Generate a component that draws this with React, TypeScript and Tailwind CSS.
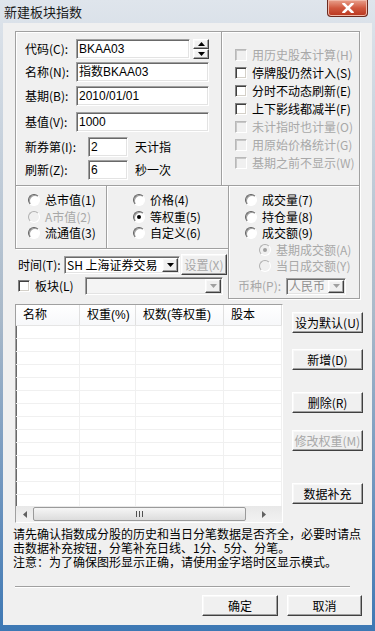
import React from "react";
import clsx from "clsx";

const sunken =
	"border border-t-[#a0a0a0] border-l-[#a0a0a0] border-r-white border-b-white shadow-[inset_1px_1px_0_#696969,inset_-1px_-1px_0_#e3e3e3]";
const raised =
	"border border-t-white border-l-white border-r-[#404040] border-b-[#404040] shadow-[inset_-1px_-1px_0_#a0a0a0,inset_1px_1px_0_#f8f8f8] bg-[#f0f0f0]";
const groupBox =
	"border border-[#a0a0a0] shadow-[inset_1px_1px_0_#ffffff,1px_1px_0_#ffffff]";

const Arrow = ({ disabled, up }: { disabled?: boolean; up?: boolean }) => (
	<svg width="7" height="4" viewBox="0 0 7 4">
		<path
			d={up ? "M0 4 L3.5 0 L7 4 Z" : "M0 0 L7 0 L3.5 4 Z"}
			fill={disabled ? "#a0a0a0" : "#000"}
		/>
	</svg>
);

const Check = ({ disabled }: { disabled?: boolean }) => (
	<span
		className={clsx(
			"box-border inline-block h-[12px] w-[12px] shrink-0 border",
			disabled
				? "border-t-[#b8b8b8] border-l-[#b8b8b8] border-r-white border-b-white bg-[#f0f0f0] shadow-[inset_1px_1px_0_#c8c8c8]"
				: "border-t-[#808080] border-l-[#808080] border-r-white border-b-white bg-white shadow-[inset_1px_1px_0_#404040,inset_-1px_-1px_0_#d4d0c8]",
		)}
	/>
);

const Radio = ({ checked, disabled }: { checked?: boolean; disabled?: boolean }) => (
	<span
		className={clsx(
			"box-border flex h-[12px] w-[12px] shrink-0 items-center justify-center rounded-full border",
			disabled
				? "border-t-[#b0b0b0] border-l-[#b0b0b0] border-r-white border-b-white bg-[#f0f0f0]"
				: "border-t-[#606060] border-l-[#606060] border-r-white border-b-white bg-white shadow-[inset_1px_1px_0_#a0a0a0]",
		)}
	>
		{checked ? (
			<span
				className={clsx(
					"h-[4px] w-[4px] rounded-full",
					disabled ? "bg-[#a0a0a0]" : "bg-black",
				)}
			/>
		) : null}
	</span>
);

const CheckRow = ({ label, disabled }: { label: string; disabled?: boolean }) => (
	<div className="flex h-[18px] items-center">
		<Check disabled={disabled} />
		<span className={clsx("ml-[5px]", disabled && "text-[#a8a8a8]")}>
			{label}
		</span>
	</div>
);

const RadioRow = ({
	label,
	checked,
	disabled,
	className,
}: {
	label: string;
	checked?: boolean;
	disabled?: boolean;
	className?: string;
}) => (
	<div className={clsx("flex h-[16.5px] items-center", className)}>
		<Radio checked={checked} disabled={disabled} />
		<span className={clsx("ml-[5px]", disabled && "text-[#a8a8a8]")}>
			{label}
		</span>
	</div>
);

const Button = ({
	children,
	disabled,
	className,
}: {
	children: React.ReactNode;
	disabled?: boolean;
	className?: string;
}) => (
	<div
		className={clsx(
			"flex h-[21px] items-center justify-center",
			raised,
			disabled && "text-[#a8a8a8]",
			className,
		)}
	>
		{children}
	</div>
);

const Field = ({ value, className }: { value: string; className?: string }) => (
	<div
		className={clsx(
			"flex h-[20px] items-center bg-white pl-[2px] font-['Liberation_Sans','Noto_Sans_CJK_SC',sans-serif]",
			sunken,
			className,
		)}
	>
		{value}
	</div>
);

const Select = ({
	value,
	disabled,
	className,
}: {
	value?: string;
	disabled?: boolean;
	className?: string;
}) => (
	<div
		className={clsx(
			"flex shrink-0 items-center justify-between pl-[2px]",
			sunken,
			disabled ? "bg-[#f4f4f4] text-[#909090]" : "bg-white",
			className,
		)}
	>
		<span className="whitespace-nowrap">{value}</span>
		<div
			className={clsx(
				"mr-[1px] flex h-[calc(100%-2px)] w-[16px] shrink-0 items-center justify-center",
				raised,
			)}
		>
			<Arrow disabled={disabled} />
		</div>
	</div>
);

const columns = [
	{ name: "名称", w: "w-[64px]" },
	{ name: "权重(%)", w: "w-[56px]" },
	{ name: "权数(等权重)", w: "w-[88px]" },
	{ name: "股本", w: "w-[58px]" },
];

const rows = Array.from({ length: 14 }, (_, i) => i);

export default function App() {
	return (
		<div className="flex h-[631px] w-[375px] flex-col overflow-hidden bg-gradient-to-b from-[#dfe5ec] via-[#a9b9c9] to-[#3d78b4] font-['Noto_Sans_CJK_SC','Liberation_Sans',sans-serif] text-[12px] leading-none text-black">
			{/* title bar */}
			<div className="flex h-[23px] shrink-0 items-start">
				<span className="mt-[5px] pl-[4px] text-[13px] text-[#1a1a1a]">
					新建板块指数
				</span>
				<div className="ml-auto mr-[7px] flex h-[17px] w-[41px] items-center justify-center rounded-b-[4px] border border-t-0 border-[#6b2b20] bg-gradient-to-b from-[#e8a08c] via-[#d0583f] to-[#b8341c] shadow-[inset_0_0_0_1px_#f0b8a8]">
					<svg width="12" height="10" viewBox="0 0 12 10">
						<path
							d="M1.5 0.5 L10.5 9.5 M10.5 0.5 L1.5 9.5"
							stroke="#fff"
							strokeWidth="2.6"
							strokeLinecap="round"
							fill="none"
						/>
					</svg>
				</div>
			</div>

			{/* client */}
			<div className="mx-[3px] mb-[6px] flex flex-1 flex-col bg-[#f0f0f0] pl-[12px] pt-[8px]">
				{/* top groups */}
				<div className="flex h-[155px]">
					<div className={clsx("flex w-[207px] flex-col pl-[9px]", groupBox)}>
						<div className="mt-[7px] flex h-[20px] items-center">
							<span className="w-[51px]">代码(C):</span>
							<Field value="BKAA03" className="w-[114px]" />
							<div className="ml-[3px] flex h-[20px] w-[16px] flex-col">
								<div className={clsx("flex flex-1 items-center justify-center", raised)}>
									<Arrow up />
								</div>
								<div className={clsx("flex flex-1 items-center justify-center", raised)}>
									<Arrow />
								</div>
							</div>
						</div>
						<div className="mt-[3px] flex h-[20px] items-center">
							<span className="w-[51px]">名称(N):</span>
							<Field value="指数BKAA03" className="w-[133px]" />
						</div>
						<div className="mt-[4px] flex h-[20px] items-center">
							<span className="w-[51px]">基期(B):</span>
							<Field value="2010/01/01" className="w-[133px]" />
						</div>
						<div className="mt-[6px] flex h-[20px] items-center">
							<span className="w-[51px]">基值(V):</span>
							<Field value="1000" className="w-[133px]" />
						</div>
						<div className="mt-[5px] flex h-[20px] items-center">
							<span className="w-[63px]">新券第(I):</span>
							<Field value="2" className="w-[40px]" />
							<span className="ml-[7px]">天计指</span>
						</div>
						<div className="mt-[3px] flex h-[20px] items-center">
							<span className="w-[63px]">刷新(Z):</span>
							<Field value="6" className="w-[40px]" />
							<span className="ml-[7px]">秒一次</span>
						</div>
					</div>
					<div className={clsx("ml-[-1px] flex w-[139px] flex-col pl-[13px] pt-[14px]", groupBox)}>
						<CheckRow label="用历史股本计算(H)" disabled />
						<CheckRow label="停牌股仍然计入(S)" />
						<CheckRow label="分时不动态刷新(E)" />
						<CheckRow label="上下影线都减半(F)" />
						<CheckRow label="未计指时也计量(O)" disabled />
						<CheckRow label="用原始价格统计(G)" disabled />
						<CheckRow label="基期之前不显示(W)" disabled />
					</div>
				</div>

				{/* radio groups */}
				<div className="mt-[-1px] flex">
					<div className="flex w-[214px] flex-col">
						<div className="flex h-[64px]">
							<div className={clsx("flex w-[92px] flex-col pl-[12px] pt-[6px]", groupBox)}>
								<RadioRow label="总市值(1)" />
								<RadioRow label="A市值(2)" disabled />
								<RadioRow label="流通值(3)" />
							</div>
							<div className={clsx("ml-[-1px] flex w-[123px] flex-col pl-[26px] pt-[6px]", groupBox)}>
								<RadioRow label="价格(4)" />
								<RadioRow label="等权重(5)" checked />
								<RadioRow label="自定义(6)" />
							</div>
						</div>
						<div className="mt-[6px] flex h-[19px] items-center pl-[3px]">
							<span className="w-[46px] shrink-0">时间(T):</span>
							<Select value="SH 上海证券交易" className="h-[18px] w-[116px]" />
							<Button disabled className="ml-[1px] h-[20px] w-[46px] shrink-0">
								设置(X)
							</Button>
						</div>
						<div className="mt-[3px] flex h-[18px] items-center pl-[3px]">
							<Check />
							<span className="ml-[5px] w-[50px] shrink-0">板块(L)</span>
							<Select disabled className="h-[18px] w-[138px]" />
						</div>
					</div>
					<div className={clsx("ml-[-1px] flex h-[114px] w-[132px] flex-col pl-[16px] pt-[6px]", groupBox)}>
						<RadioRow label="成交量(7)" />
						<RadioRow label="持仓量(8)" />
						<RadioRow label="成交额(9)" />
						<RadioRow label="基期成交额(A)" checked disabled className="ml-[14px]" />
						<RadioRow label="当日成交额(Y)" disabled className="ml-[14px]" />
						<div className="ml-[-7px] mt-[3px] flex h-[17px] items-center">
							<span className="w-[48px] shrink-0 text-[#a8a8a8]">币种(P):</span>
							<Select value="人民币" disabled className="h-[17px] w-[60px]" />
						</div>
					</div>
				</div>

				{/* list + side buttons */}
				<div className="mt-[5px] flex">
					<div className={clsx("flex h-[219px] w-[268px] flex-col bg-white", sunken)}>
						<div className="flex h-[21px] shrink-0 border-b border-[#e5e5e5] bg-gradient-to-b from-white to-[#f7f8fa]">
							{columns.map((c) => (
								<div
									key={c.name}
									className={clsx(
										"flex items-center border-r border-[#e0e0e0] pl-[7px] font-['Liberation_Sans','Noto_Sans_CJK_SC',sans-serif]",
										c.w,
									)}
								>
									{c.name}
								</div>
							))}
						</div>
						<div className="flex-1 overflow-hidden">
							{rows.map((r) => (
								<div key={r} className="flex h-[13px] border-b border-[#f0f0f0]">
									{columns.map((c) => (
										<div key={c.name} className={clsx("border-r border-[#f0f0f0]", c.w)} />
									))}
								</div>
							))}
						</div>
						<div className="flex h-[16px] shrink-0 items-center bg-gradient-to-b from-[#e8e8e8] to-[#f2f2f2]">
							<div className="flex w-[17px] items-center justify-center">
								<svg width="4" height="7" viewBox="0 0 4 7">
									<path d="M4 0 L0 3.5 L4 7 Z" fill="#606060" />
								</svg>
							</div>
							<div className="flex h-[14px] w-[213px] items-center justify-center rounded-[2px] border border-[#9a9a9a] bg-gradient-to-b from-[#f6f6f6] to-[#dcdcdc]">
								<div className="flex gap-[2px]">
									<span className="h-[6px] w-[1px] bg-[#505050]" />
									<span className="h-[6px] w-[1px] bg-[#505050]" />
									<span className="h-[6px] w-[1px] bg-[#505050]" />
								</div>
							</div>
							<div className="flex flex-1 items-center justify-center">
								<svg width="4" height="7" viewBox="0 0 4 7">
									<path d="M0 0 L4 3.5 L0 7 Z" fill="#606060" />
								</svg>
							</div>
						</div>
					</div>
					<div className="ml-[9px] flex w-[71px] flex-col">
						<Button className="mt-[8px]">设为默认(U)</Button>
						<Button className="mt-[16px]">新增(D)</Button>
						<Button className="mt-[22px]">删除(R)</Button>
						<Button disabled className="mt-[17px]">
							修改权重(M)
						</Button>
						<Button className="mt-[32px]">数据补充</Button>
					</div>
				</div>

				{/* note */}
				<div className="ml-[-2px] mt-[4px] leading-[14px]">
					<p>请先确认指数成分股的历史和当日分笔数据是否齐全，必要时请点</p>
					<p>击数据补充按钮，分笔补充日线、1分、5分、分笔。</p>
					<p>注意：为了确保图形显示正确，请使用金字塔时区显示模式。</p>
				</div>

				<div className="mt-[17px] h-[2px] w-[335px] border-t border-b border-t-[#a0a0a0] border-b-white" />

				<div className="mt-[7px] flex justify-end gap-[9px] pr-[10px]">
					<Button className="w-[76px]">确定</Button>
					<Button className="w-[75px]">取消</Button>
				</div>
			</div>
		</div>
	);
}
